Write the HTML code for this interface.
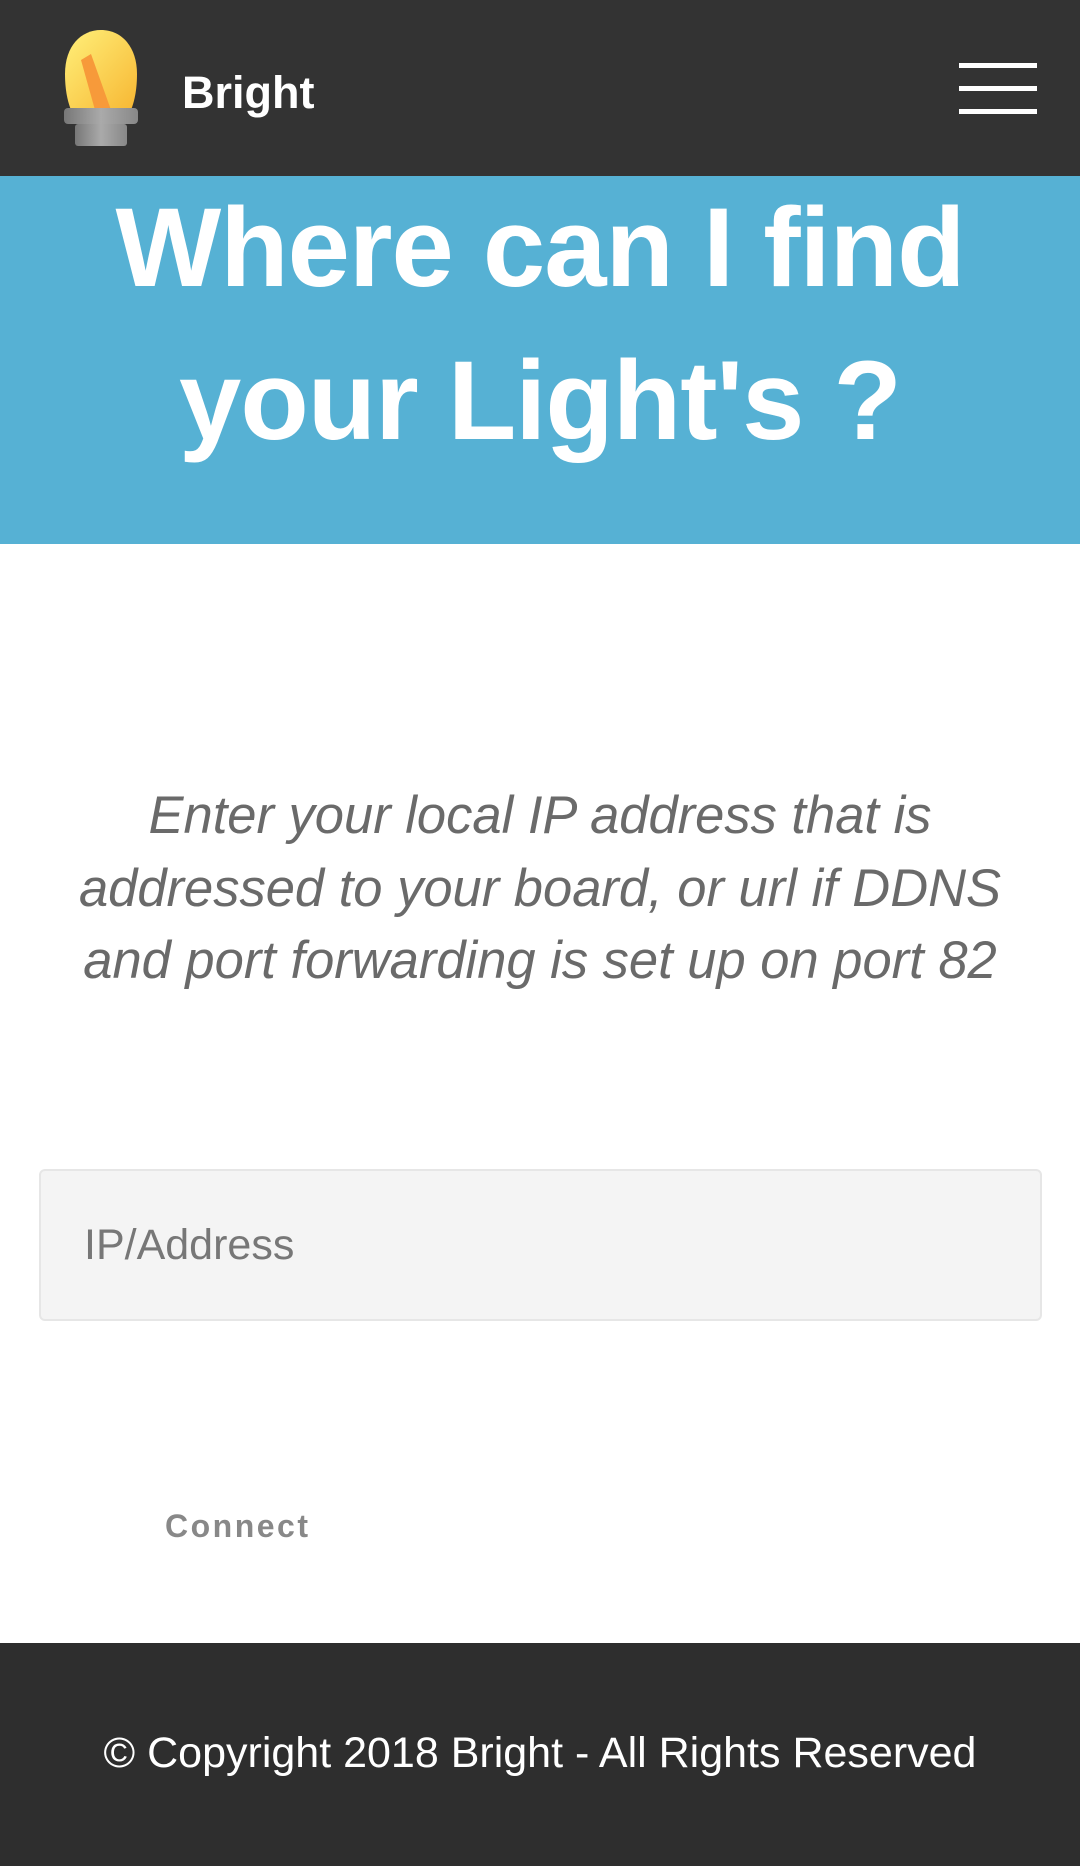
<!DOCTYPE html>
<html><head><meta charset="utf-8"><style>
*{margin:0;padding:0;box-sizing:border-box}
html,body{width:1080px;height:1866px;overflow:hidden;background:#fff;font-family:"Liberation Sans",sans-serif}
.hdr{position:absolute;left:0;top:0;width:1080px;height:176px;background:#333}
.brand{position:absolute;left:182px;top:70px;font-size:45px;font-weight:bold;color:#fff;line-height:1}
.ham{position:absolute;left:959px;width:78px;height:5px;background:#fff}
.hero{position:absolute;left:0;top:176px;width:1080px;height:368px;background:#56b1d4}
.t{position:absolute;left:0;width:1080px;text-align:center;color:#fff;font-weight:bold;font-size:112px;line-height:1;letter-spacing:-1px;white-space:nowrap}
.p{position:absolute;left:0;width:1080px;text-align:center;color:#6a6a6a;font-style:italic;font-size:52.5px;line-height:1;white-space:nowrap}
.inp{position:absolute;left:39px;top:1169px;width:1003px;height:152px;background:#f4f4f4;border:2px solid #e6e6e6;border-radius:6px}
.ph{position:absolute;left:84px;top:1224px;font-size:43px;color:#777;line-height:1}
.btn{position:absolute;left:165px;top:1510px;font-size:32px;font-weight:bold;color:#888;letter-spacing:2.5px;line-height:1}
.ftr{position:absolute;left:0;top:1643px;width:1080px;height:223px;background:#2e2e2e}
.ft{position:absolute;left:0;top:1732px;width:1080px;text-align:center;color:#fff;font-size:43px;line-height:1;white-space:nowrap}
</style></head><body>
<div class="hdr">
<svg style="position:absolute;left:59px;top:30px" width="84" height="120" viewBox="0 0 84 120">
<defs><linearGradient id="g" x1="0" y1="0" x2="1" y2="1"><stop offset="0" stop-color="#fff07a"/><stop offset="1" stop-color="#f7b733"/></linearGradient>
<linearGradient id="m" x1="0" x2="1"><stop offset="0" stop-color="#777"/><stop offset="0.5" stop-color="#aaa"/><stop offset="1" stop-color="#888"/></linearGradient></defs>
<path d="M42 0C22 0 6 16 6 44c0 14 2 26 6 36h60c4-10 6-22 6-36C78 16 62 0 42 0z" fill="url(#g)"/>
<path d="M22 30l10-6 20 56H36z" fill="#f79a3a"/>
<rect x="5" y="78" width="74" height="16" rx="4" fill="url(#m)"/>
<rect x="16" y="94" width="52" height="22" rx="3" fill="url(#m)"/>
</svg>
<div class="brand">Bright</div>
<div class="ham" style="top:63px"></div>
<div class="ham" style="top:86px"></div>
<div class="ham" style="top:109px"></div>
</div>
<div class="hero"></div>
<div class="t" style="top:192px">Where can I find</div>
<div class="t" style="top:345px">your Light's ?</div>
<div class="p" style="top:790px">Enter your local IP address that is</div>
<div class="p" style="top:863px">addressed to your board, or url if DDNS</div>
<div class="p" style="top:935px">and port forwarding is set up on port 82</div>
<div class="inp"></div>
<div class="ph">IP/Address</div>
<div class="btn">Connect</div>
<div class="ftr"></div>
<div class="ft">© Copyright 2018 Bright - All Rights Reserved</div>
</body></html>
